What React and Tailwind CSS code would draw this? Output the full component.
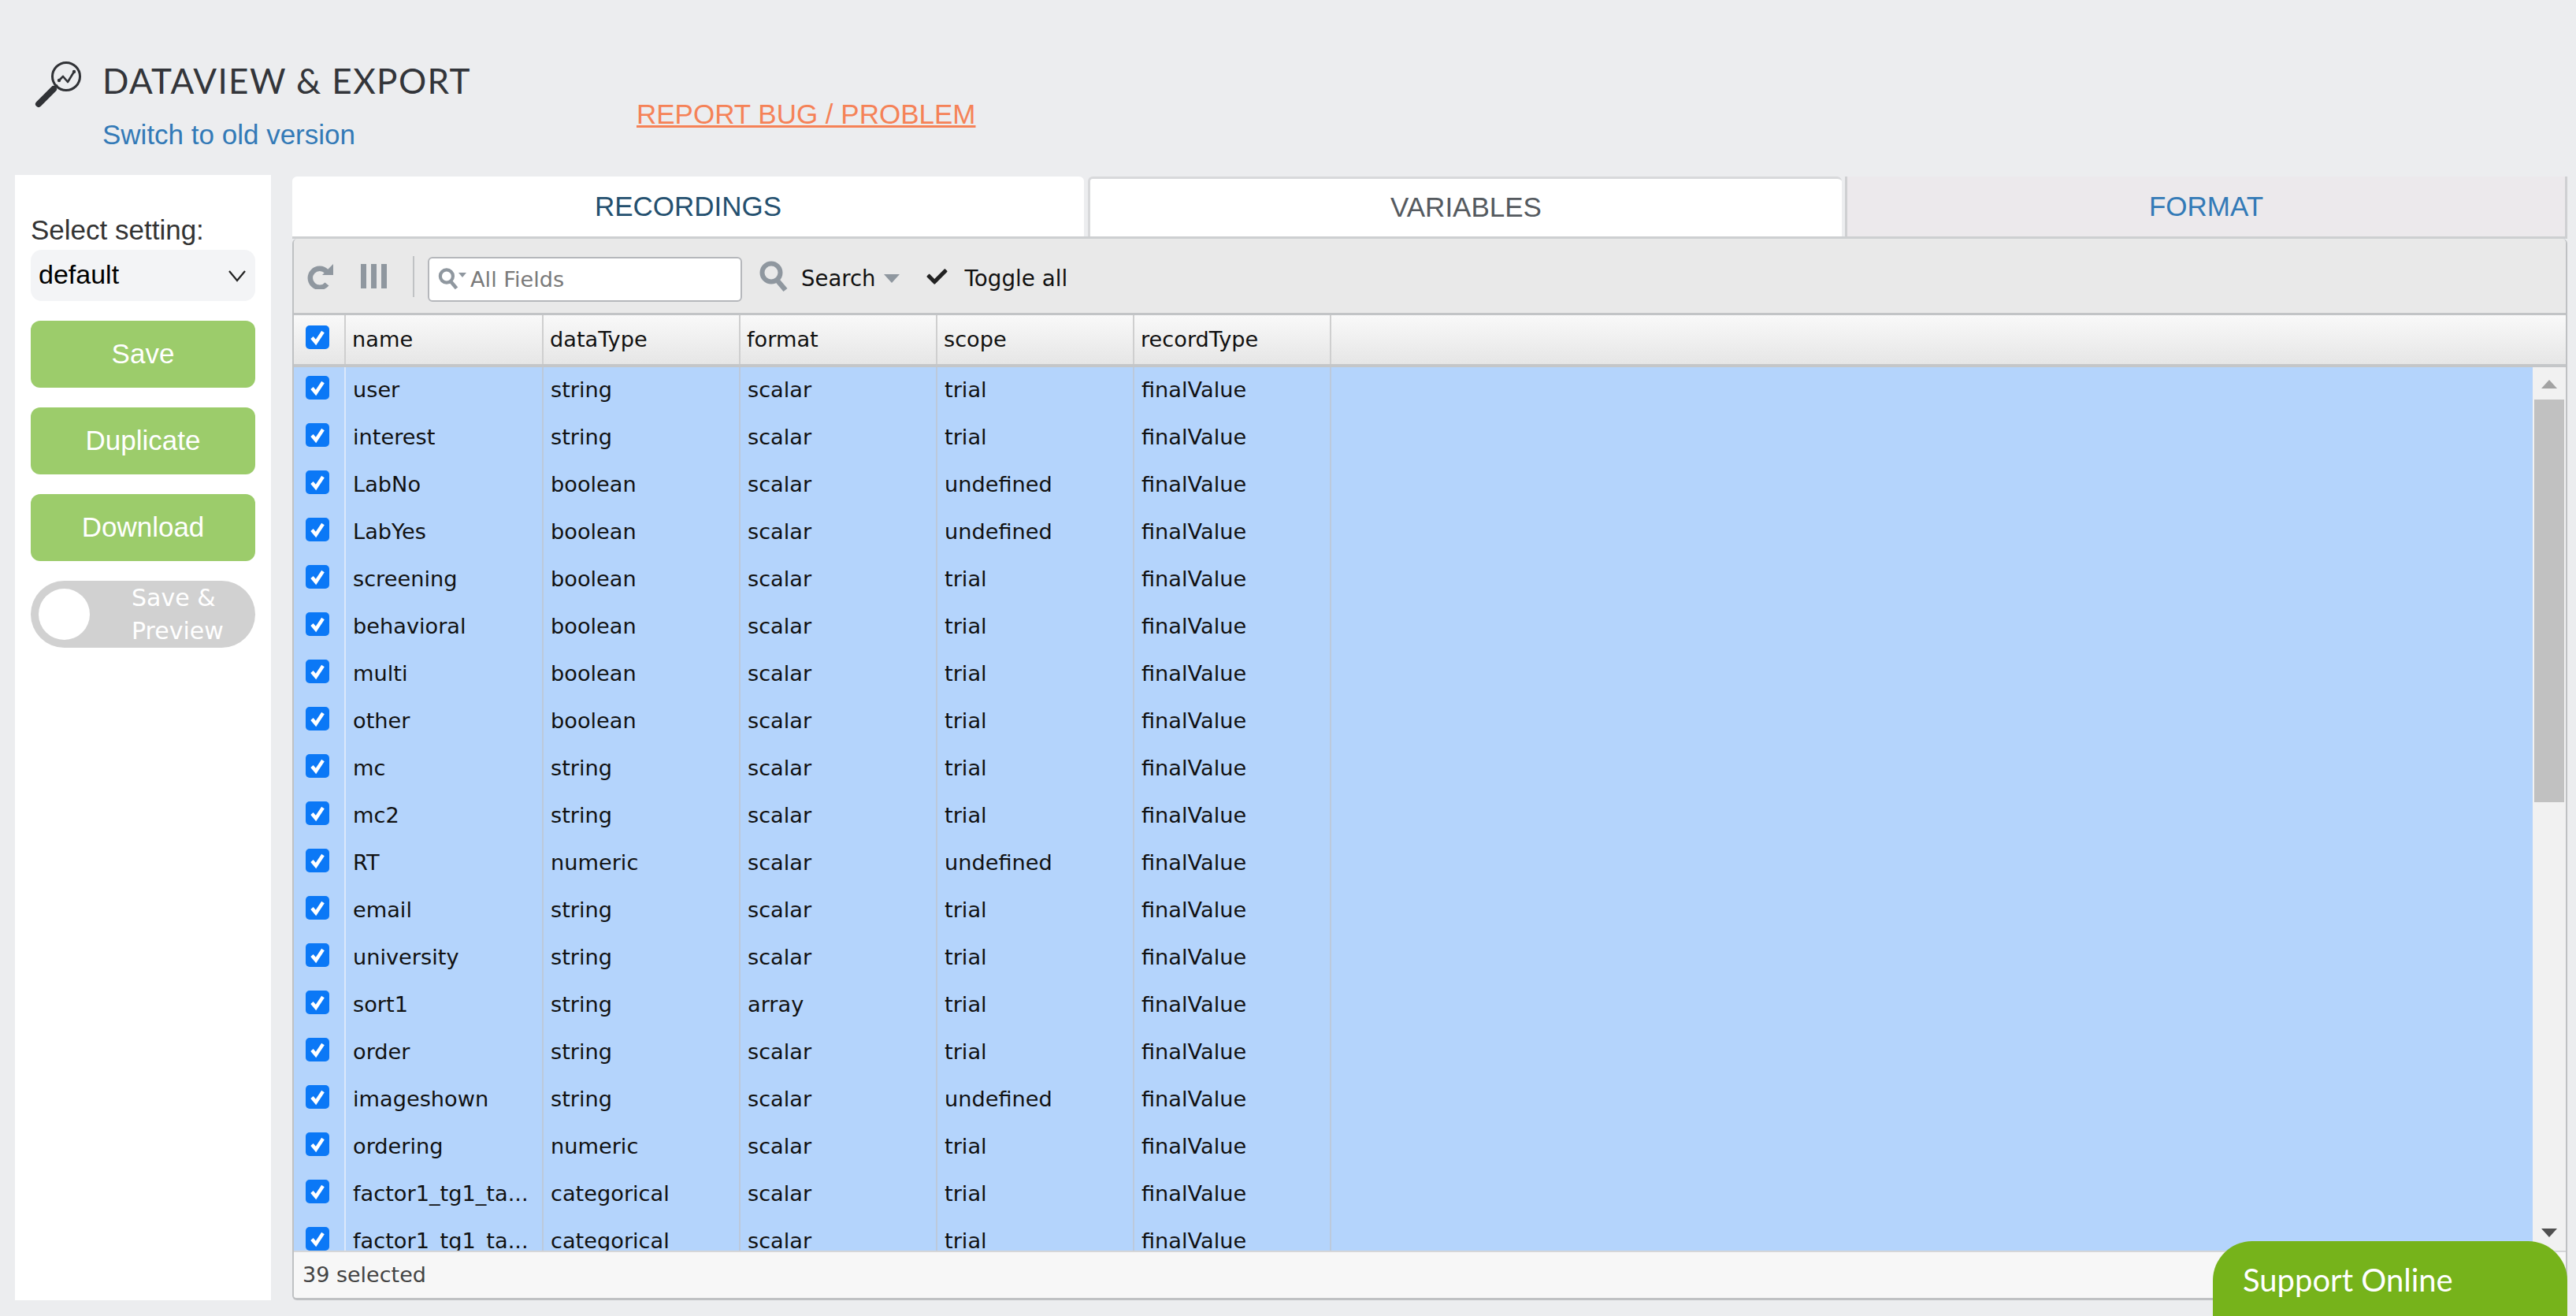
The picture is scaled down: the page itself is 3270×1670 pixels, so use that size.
import React from "react";
import { FaCheck } from "react-icons/fa";

const rows = [
  ["user", "string", "scalar", "trial"],
  ["interest", "string", "scalar", "trial"],
  ["LabNo", "boolean", "scalar", "undefined"],
  ["LabYes", "boolean", "scalar", "undefined"],
  ["screening", "boolean", "scalar", "trial"],
  ["behavioral", "boolean", "scalar", "trial"],
  ["multi", "boolean", "scalar", "trial"],
  ["other", "boolean", "scalar", "trial"],
  ["mc", "string", "scalar", "trial"],
  ["mc2", "string", "scalar", "trial"],
  ["RT", "numeric", "scalar", "undefined"],
  ["email", "string", "scalar", "trial"],
  ["university", "string", "scalar", "trial"],
  ["sort1", "string", "array", "trial"],
  ["order", "string", "scalar", "trial"],
  ["imageshown", "string", "scalar", "undefined"],
  ["ordering", "numeric", "scalar", "trial"],
  ["factor1_tg1_ta...", "categorical", "scalar", "trial"],
  ["factor1_tg1_ta...", "categorical", "scalar", "trial"],
];

function Check() {
  return (
    <span className="flex h-[30px] w-[30px] items-center justify-center rounded-[5px] bg-[#0b78f6]">
      <svg viewBox="0 0 30 30" className="h-[30px] w-[30px]">
        <path d="M8 15.5l5 6L22 8" fill="none" stroke="#fff" strokeWidth="4.4" />
      </svg>
    </span>
  );
}

function Logo() {
  return (
    <svg viewBox="0 0 64 64" className="h-[64px] w-[64px]">
      <circle cx="42" cy="22" r="17.5" fill="none" stroke="#303236" strokeWidth="3" />
      <path d="M31 33l-5 4" stroke="#303236" strokeWidth="3" />
      <path d="M26 38L7 57" stroke="#303236" strokeWidth="8" strokeLinecap="round" />
      <path d="M33 27l5-5 6 7 8-13" fill="none" stroke="#303236" strokeWidth="2.6" strokeLinejoin="round" />
      <circle cx="33" cy="27" r="2.2" fill="#303236" />
      <circle cx="52" cy="16" r="2.2" fill="#303236" />
    </svg>
  );
}

function SmallSearch({ cls }) {
  return (
    <svg viewBox="0 0 40 40" className={cls}>
      <circle cx="17" cy="15" r="11.5" fill="none" stroke="#8f979f" strokeWidth="6" />
      <path d="M24 24l11 13" stroke="#8f979f" strokeWidth="6.5" />
    </svg>
  );
}

const cell = "flex w-[250px] shrink-0 items-center border-r-2";

export default function App() {
  return (
    <div className="relative flex h-[1670px] w-[3270px] flex-col overflow-hidden bg-[#ecedef] font-['Liberation_Sans',sans-serif]">
      <header className="flex h-[222px] shrink-0 items-start">
        <div className="ml-[42px] mt-[75px] w-[88px] shrink-0">
          <Logo />
        </div>
        <div className="w-[678px] shrink-0 pt-[75px]">
          <div className="font-['Lato',sans-serif] text-[44px] leading-[54px] tracking-[1.4px] text-[#33353a]">DATAVIEW &amp; EXPORT</div>
          <a className="mt-[22px] block text-[35px] leading-[40px] text-[#337ab7]">Switch to old version</a>
        </div>
        <a className="mt-[124px] text-[35px] leading-[42px] text-[#f58257] underline">REPORT BUG / PROBLEM</a>
      </header>

      <div className="flex items-start pl-[19px]">
        <aside className="flex h-[1428px] w-[325px] shrink-0 flex-col bg-white px-[20px] pt-[50px]">
          <label className="text-[35px] leading-[40px] text-[#333]">Select setting:</label>
          <div className="mt-[5px] flex h-[65px] items-center justify-between rounded-[14px] bg-[#f3f4f6] pb-[3px] pl-[10px] pr-[11px] text-[34px] text-black">
            <span>default</span>
            <svg viewBox="0 0 24 16" className="mt-[3px] h-[16px] w-[24px]">
              <path d="M2 2l10 12L22 2" fill="none" stroke="#222" strokeWidth="2.2" />
            </svg>
          </div>
          {["Save", "Duplicate", "Download"].map((b) => (
            <button key={b} className="mt-[25px] flex h-[85px] items-center justify-center rounded-[12px] bg-[#9ccc6b] text-[35px] text-white">
              {b}
            </button>
          ))}
          <div className="mt-[25px] flex h-[85px] items-center rounded-full bg-[#d1d1d1] pl-[10px]">
            <span className="h-[65px] w-[65px] shrink-0 rounded-full bg-white" />
            <span className="ml-[53px] font-['DejaVu_Sans',sans-serif] text-[30px] leading-[42px] text-white">
              Save &amp;
              <br />
              Preview
            </span>
          </div>
        </aside>

        <main className="ml-[27px] mt-[2px] flex h-[1426px] w-[2888px] flex-col">
          <nav className="flex h-[79px] shrink-0 border-b-[3px] border-[#cdcfd1] text-[35px]">
            <div className="flex w-[1005px] items-center justify-center rounded-t-[6px] bg-white text-[#24506f]">RECORDINGS</div>
            <div className="ml-[5px] flex w-[957px] items-center justify-center rounded-t-[6px] border-l-[3px] border-t-[3px] border-[#d8d9db] bg-white text-[#555a5f]">VARIABLES</div>
            <div className="ml-[4px] flex flex-1 items-center justify-center border-l-[3px] border-r-[3px] border-[#cfd0d2] bg-[#ece9ec] text-[#337ab7]">FORMAT</div>
          </nav>

          <div className="flex min-h-0 flex-1 flex-col overflow-hidden rounded-[6px] border-x-2 border-b-[3px] border-[#bfc1c3] font-['DejaVu_Sans',sans-serif]">
            <div className="flex h-[97px] shrink-0 items-center border-b-[3px] border-[#c2c4c6] bg-[#e9e9e9] pl-[17px] pt-[8px] text-[27.2px] text-[#111]">
              <svg viewBox="0 0 33 32" className="mb-[7px] h-[32px] w-[33px]">
                <path d="M24.5 9.5A12 12 0 1 0 25 25.5" fill="none" stroke="#8f979f" strokeWidth="6.5" />
                <path d="M33 0v14H19z" fill="#8f979f" />
              </svg>
              <div className="mb-[7px] ml-[35px] flex h-[31px] w-[33px] justify-between">
                <span className="w-[7px] bg-[#8f979f]" />
                <span className="w-[7px] bg-[#8f979f]" />
                <span className="w-[7px] bg-[#8f979f]" />
              </div>
              <span className="mb-[7px] ml-[33px] h-[52px] w-[2px] bg-[#c0c2c4]" />
              <div className="ml-[17px] flex h-[57px] w-[399px] items-center rounded-[6px] border-2 border-[#b5b7bb] bg-white pl-[10px]">
                <SmallSearch cls="h-[28px] w-[28px]" />
                <span className="mb-[10px] ml-[-1px] h-0 w-0 border-x-[5px] border-t-[6px] border-x-transparent border-t-[#8f979f]" />
                <span className="ml-[5px] pt-[2px] text-[#7a7a7a]">All Fields</span>
              </div>
              <SmallSearch cls="mb-[6px] ml-[20px] h-[40px] w-[40px]" />
              <span className="ml-[15px] text-[27.5px]">Search</span>
              <span className="ml-[11px] mb-[2px] h-0 w-0 border-x-[10px] border-t-[11px] border-x-transparent border-t-[#8f979f]" />
              <FaCheck className="mb-[6px] ml-[32px] h-[26px] w-[31px] text-[#222]" />
              <span className="ml-[19px] text-[27.8px]">Toggle all</span>
            </div>

            <div className="flex h-[66px] shrink-0 border-b-[4px] border-[#c4c6c8] bg-gradient-to-b from-[#f9f9f9] to-[#e6e6e6] text-[27.2px] text-[#111]">
              <div className="flex w-[66px] shrink-0 items-center justify-center border-r-2 border-[#cfcfcf] pb-[6px] pr-[4px]">
                <Check />
              </div>
              {["name", "dataType", "format", "scope", "recordType"].map((h, i) => (
                <div key={h} className={`${cell} border-[#cfcfcf] pl-[8px] ${i === 0 ? "w-[251px]" : ""}`}>{h}</div>
              ))}
            </div>

            <div className="flex min-h-0 flex-1">
              <div className="min-w-0 flex-1 overflow-hidden bg-[#b4d4fc] text-[27.2px] text-[#111]">
                <div className="mt-[-4px]">
                  {rows.map((r, i) => (
                    <div key={i} className="flex h-[60px]">
                      <div className="flex w-[66px] shrink-0 items-center justify-center border-r-2 border-[#dbe8fb] pr-[4px]">
                        <Check />
                      </div>
                      {[...r, "finalValue"].map((c, j) => (
                        <div key={j} className={`${cell} border-[#bcc9db] pl-[9px] pt-[6px] ${j === 0 ? "w-[251px]" : ""}`}>{c}</div>
                      ))}
                    </div>
                  ))}
                </div>
              </div>
              <div className="flex w-[42px] shrink-0 flex-col items-center bg-[#f1f1f1] pb-[17px] pt-[16px]">
                <span className="h-0 w-0 border-x-[10px] border-b-[11px] border-x-transparent border-b-[#a3a3a3]" />
                <span className="mt-[14px] h-[511px] w-[38px] bg-[#c1c1c1]" />
                <span className="mt-auto h-0 w-0 border-x-[10px] border-t-[11px] border-x-transparent border-t-[#505050]" />
              </div>
            </div>

            <div className="flex h-[60px] shrink-0 items-center border-t-2 border-[#d5d6d8] bg-[#f7f7f7] pl-[11px] text-[27px] text-[#444]">39 selected</div>
          </div>
        </main>
      </div>

      <div className="absolute bottom-0 left-[2809px] flex h-[95px] w-[450px] items-center rounded-t-[50px] bg-[#76b31b] pl-[38px] pt-[2px] font-['Lato',sans-serif] text-[40px] text-white">
        Support Online
      </div>
    </div>
  );
}
